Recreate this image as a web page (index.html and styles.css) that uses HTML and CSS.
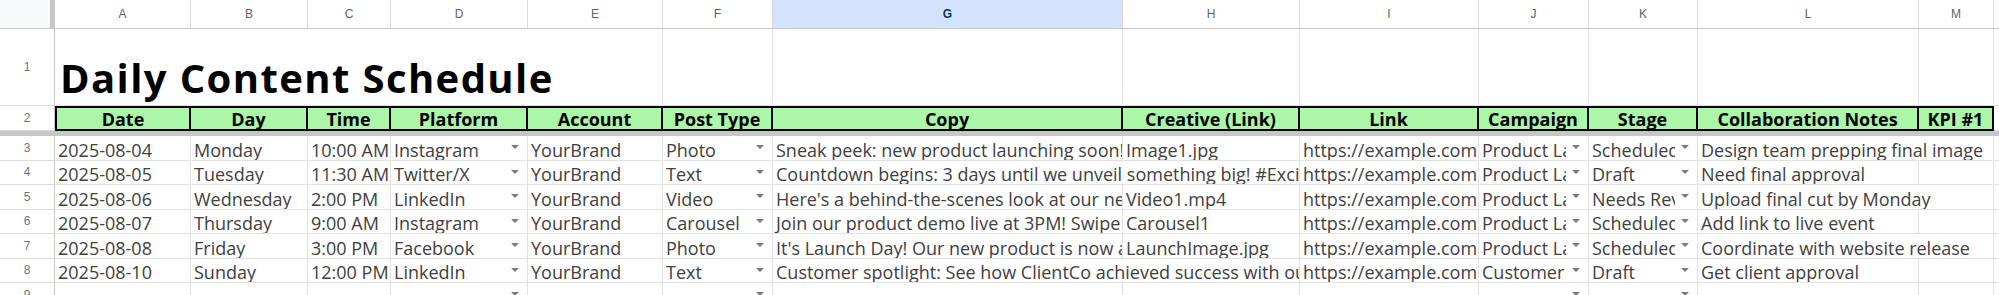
FILE: index.html
```html
<!DOCTYPE html>
<html lang="en">
<head>
<meta charset="UTF-8">
<meta name="viewport" content="width=device-width, initial-scale=1.0">
<title>Daily Content Schedule</title>
<link rel="stylesheet" href="styles.css">
</head>
<body>

<div class="sheet">
<!-- column letters -->
<div class="corner"></div>
<div class="colh">A</div>
<div class="colh">B</div>
<div class="colh">C</div>
<div class="colh">D</div>
<div class="colh">E</div>
<div class="colh">F</div>
<div class="colh sel">G</div>
<div class="colh">H</div>
<div class="colh">I</div>
<div class="colh">J</div>
<div class="colh">K</div>
<div class="colh">L</div>
<div class="colh">M</div>
<div class="colh last"></div>

<!-- row 1: title -->
<div class="rowh">1</div>
<div class="c title">Daily Content Schedule</div>
<div class="c"></div><div class="c"></div><div class="c"></div><div class="c"></div><div class="c"></div>
<div class="c"></div><div class="c"></div><div class="c"></div><div class="c"></div>

<!-- row 2: headers -->
<div class="rowh">2</div>
<div class="hd first">Date</div>
<div class="hd">Day</div>
<div class="hd">Time</div>
<div class="hd">Platform</div>
<div class="hd">Account</div>
<div class="hd">Post Type</div>
<div class="hd">Copy</div>
<div class="hd">Creative (Link)</div>
<div class="hd">Link</div>
<div class="hd">Campaign</div>
<div class="hd">Stage</div>
<div class="hd">Collaboration Notes</div>
<div class="hd">KPI #1</div>
<div class="c plain"></div>

<div class="freeze"></div>

<!-- row 3 -->
<div class="rowh">3</div>
<div class="c">2025-08-04</div>
<div class="c">Monday</div>
<div class="c">10:00 AM</div>
<div class="c dd"><span class="v">Instagram</span></div>
<div class="c">YourBrand</div>
<div class="c dd"><span class="v">Photo</span></div>
<div class="c">Sneak peek: new product launching soon!</div>
<div class="c">Image1.jpg</div>
<div class="c">https://example.com</div>
<div class="c dd"><span class="v">Product Launch</span></div>
<div class="c dd"><span class="v">Scheduled</span></div>
<div class="c span2">Design team prepping final image</div>
<div class="c"></div>

<!-- row 4 -->
<div class="rowh">4</div>
<div class="c">2025-08-05</div>
<div class="c">Tuesday</div>
<div class="c">11:30 AM</div>
<div class="c dd"><span class="v">Twitter/X</span></div>
<div class="c">YourBrand</div>
<div class="c dd"><span class="v">Text</span></div>
<div class="c span2">Countdown begins: 3 days until we unveil something big! #Excited</div>
<div class="c">https://example.com</div>
<div class="c dd"><span class="v">Product Launch</span></div>
<div class="c dd"><span class="v">Draft</span></div>
<div class="c">Need final approval</div>
<div class="c"></div>
<div class="c"></div>

<!-- row 5 -->
<div class="rowh">5</div>
<div class="c">2025-08-06</div>
<div class="c">Wednesday</div>
<div class="c">2:00 PM</div>
<div class="c dd"><span class="v">LinkedIn</span></div>
<div class="c">YourBrand</div>
<div class="c dd"><span class="v">Video</span></div>
<div class="c">Here's a behind-the-scenes look at our new product!</div>
<div class="c">Video1.mp4</div>
<div class="c">https://example.com</div>
<div class="c dd"><span class="v">Product Launch</span></div>
<div class="c dd"><span class="v">Needs Review</span></div>
<div class="c span2">Upload final cut by Monday</div>
<div class="c"></div>

<!-- row 6 -->
<div class="rowh">6</div>
<div class="c">2025-08-07</div>
<div class="c">Thursday</div>
<div class="c">9:00 AM</div>
<div class="c dd"><span class="v">Instagram</span></div>
<div class="c">YourBrand</div>
<div class="c dd"><span class="v">Carousel</span></div>
<div class="c">Join our product demo live at 3PM! Swipe through to learn more.</div>
<div class="c">Carousel1</div>
<div class="c">https://example.com</div>
<div class="c dd"><span class="v">Product Launch</span></div>
<div class="c dd"><span class="v">Scheduled</span></div>
<div class="c">Add link to live event</div>
<div class="c"></div>
<div class="c"></div>

<!-- row 7 -->
<div class="rowh">7</div>
<div class="c">2025-08-08</div>
<div class="c">Friday</div>
<div class="c">3:00 PM</div>
<div class="c dd"><span class="v">Facebook</span></div>
<div class="c">YourBrand</div>
<div class="c dd"><span class="v">Photo</span></div>
<div class="c">It's Launch Day! Our new product is now available!</div>
<div class="c">LaunchImage.jpg</div>
<div class="c">https://example.com</div>
<div class="c dd"><span class="v">Product Launch</span></div>
<div class="c dd"><span class="v">Scheduled</span></div>
<div class="c span2">Coordinate with website release</div>
<div class="c"></div>

<!-- row 8 -->
<div class="rowh">8</div>
<div class="c">2025-08-10</div>
<div class="c">Sunday</div>
<div class="c">12:00 PM</div>
<div class="c dd"><span class="v">LinkedIn</span></div>
<div class="c">YourBrand</div>
<div class="c dd"><span class="v">Text</span></div>
<div class="c span2">Customer spotlight: See how ClientCo achieved success with our product!</div>
<div class="c">https://example.com</div>
<div class="c dd"><span class="v">Customer Spotlight</span></div>
<div class="c dd"><span class="v">Draft</span></div>
<div class="c">Get client approval</div>
<div class="c"></div>
<div class="c"></div>

<!-- row 9 (empty) -->
<div class="rowh">9</div>
<div class="c"></div>
<div class="c"></div>
<div class="c"></div>
<div class="c dd"></div>
<div class="c"></div>
<div class="c dd"></div>
<div class="c"></div>
<div class="c"></div>
<div class="c"></div>
<div class="c dd"></div>
<div class="c dd"></div>
<div class="c"></div>
<div class="c"></div>
<div class="c"></div>
</div>

</body>
</html>
```

FILE: styles.css
```css
body {
margin: 0;
background: #fff;
overflow: hidden;
}
.sheet {
display: grid;
grid-template-columns: 55px 136px 117px 83px 137px 135px 110px 350px 177px 179px 110px 109px 221px 75px 200px;
grid-template-rows: 29px 77px 25px 5px repeat(7, 24.5px);
width: 2019px;
}
.corner {
background: #f8f9fa;
border-right: 5px solid #c7c7c7;
border-bottom: 1px solid #c4c7c5;
box-sizing: border-box;
}
.colh {
display: flex;
align-items: center;
justify-content: center;
font-family: "Liberation Sans", Arial, sans-serif;
font-size: 12px;
color: #5f6368;
border-right: 1px solid #dadce0;
border-bottom: 1px solid #c4c7c5;
box-sizing: border-box;
}
.colh.sel {
background: #d3e3fd;
color: #0b2f6e;
font-weight: bold;
}
.colh.last {
border-right: none;
}
.rowh {
display: flex;
align-items: center;
justify-content: center;
font-family: "Liberation Sans", Arial, sans-serif;
font-size: 12px;
color: #6f7377;
border-right: 1px solid #c4c7c5;
border-bottom: 1px solid #dadce0;
box-sizing: border-box;
}
.c {
display: flex;
align-items: flex-end;
padding: 0 3px;
font-family: "Open Sans", sans-serif;
font-size: 18px;
line-height: 19px;
color: #404040;
white-space: nowrap;
overflow: hidden;
border-right: 1px solid #e2e2e2;
border-bottom: 1px solid #e2e2e2;
box-sizing: border-box;
}
.c.plain {
border-right: none;
}
.title {
grid-column: span 5;
padding: 0 0 7px 5px;
font-weight: bold;
font-size: 40px;
line-height: 40px;
letter-spacing: 1.4px;
color: #000;
}
.span2 {
grid-column: span 2;
}
.hd {
display: flex;
align-items: flex-end;
justify-content: center;
font-family: "Open Sans", sans-serif;
font-weight: bold;
font-size: 18px;
line-height: 19px;
color: #000;
white-space: nowrap;
overflow: hidden;
background: #abf7a7;
border-top: 2px solid #000;
border-bottom: 2px solid #000;
border-right: 2px solid #000;
box-sizing: border-box;
}
.hd.first {
border-left: 2px solid #000;
}
.freeze {
grid-column: 1 / -1;
background: #c7c7c7;
}
.dd {
position: relative;
padding-right: 22px;
}
.dd .v {
min-width: 0;
overflow: hidden;
}
.dd::after {
content: "";
position: absolute;
right: 8px;
top: 9px;
border-left: 4px solid transparent;
border-right: 4px solid transparent;
border-top: 4px solid #7a7a7a;
}
```
